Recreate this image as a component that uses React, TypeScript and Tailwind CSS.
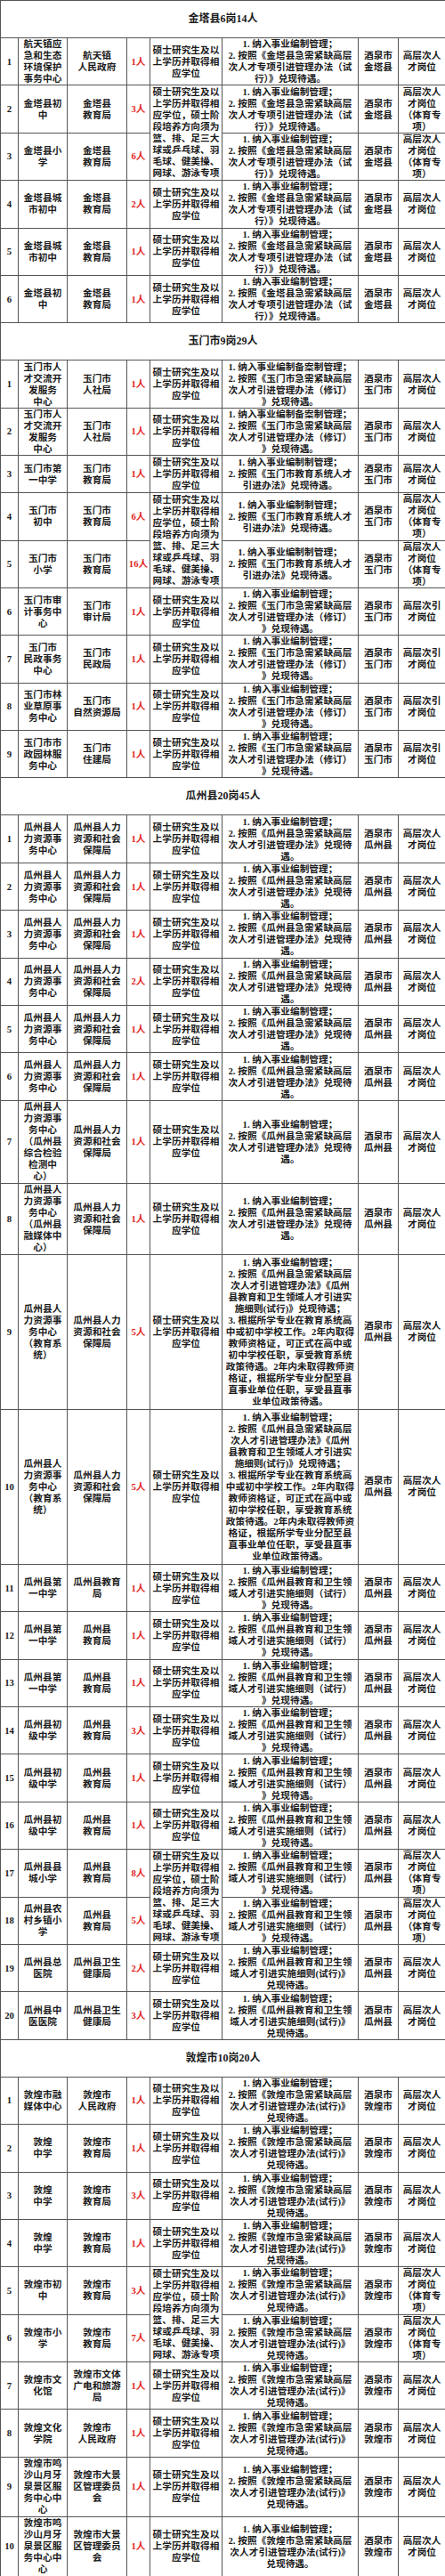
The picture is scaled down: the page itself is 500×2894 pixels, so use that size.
import React from 'react'

type Row = {
  no: string
  unit: string[]
  dept: string[]
  count: string
  edu: 'std' | 'sport' | 'skip'
  benefit: string[]
  place: string[]
  post: string[]
  lines: number
}

type Section = { title: string; rows: Row[] }

const STD = ['硕士研究生及以', '上学历并取得相', '应学位']
const SPORT = [
  '硕士研究生及以',
  '上学历并取得相',
  '应学位，硕士阶',
  '段培养方向须为',
  '篮、排、足三大',
  '球或乒乓球、羽',
  '毛球、健美操、',
  '网球、游泳专项',
]
const POST = ['高层次人', '才岗位']
const POST_SPORT = ['高层次人', '才岗位', '（体育专', '项）']
const POST_YIN = ['高层次引', '才岗位']

const JT = ['1. 纳入事业编制管理；', '2. 按照《金塔县急需紧缺高层', '次人才专项引进管理办法（试', '行）》兑现待遇。']
const YM1 = ['1. 纳入事业编制备案制管理；', '2. 按照《玉门市急需紧缺高层', '次人才引进管理办法（修订）', '》兑现待遇。']
const YM2 = ['1. 纳入事业编制制管理；', '2. 按照《玉门市教育系统人才', '引进办法》兑现待遇。']
const YM3 = ['1. 纳入事业编制管理；', '2. 按照《玉门市急需紧缺高层', '次人才引进管理办法（修订）', '》兑现待遇。']
const GZ1 = ['1. 纳入事业编制管理；', '2. 按照《瓜州县急需紧缺高层', '次人才引进管理办法》兑现待', '遇。']
const GZ2 = [
  '1. 纳入事业编制管理；',
  '2. 按照《瓜州县急需紧缺高层',
  '次人才引进管理办法》《瓜州',
  '县教育和卫生领域人才引进实',
  '施细则(试行)》兑现待遇；',
  '3. 根据所学专业在教育系统高',
  '中或初中学校工作。2年内取得',
  '教师资格证，可正式在高中或',
  '初中学校任职，享受教育系统',
  '政策待遇。2年内未取得教师资',
  '格证，根据所学专业分配至县',
  '直事业单位任职，享受县直事',
  '业单位政策待遇。',
]
const GZ3 = ['1. 纳入事业编制管理；', '2. 按照《瓜州县教育和卫生领', '域人才引进实施细则（试行）', '》兑现待遇。']
const GZ4 = ['1. 纳入事业编制管理；', '2. 按照《瓜州县教育和卫生领', '域人才引进实施细则(试行)》', '兑现待遇。']
const DH = ['1. 纳入事业编制管理；', '2. 按照《敦煌市急需紧缺高层', '次人才引进管理办法(试行)》', '兑现待遇。']

const JQJT = ['酒泉市', '金塔县']
const JQYM = ['酒泉市', '玉门市']
const JQGZ = ['酒泉市', '瓜州县']
const JQDH = ['酒泉市', '敦煌市']

const GZHR = ['瓜州县人', '力资源事', '务中心']
const GZRS = ['瓜州县人力', '资源和社会', '保障局']
const GZJY = ['瓜州县', '教育局']
const DHJY = ['敦煌市', '教育局']
const DHJQ = ['敦煌市鸣', '沙山月牙', '泉景区服', '务中心中', '心']
const DHDJ = ['敦煌市大景', '区管理委员', '会']

function r(
  no: string,
  unit: string[],
  dept: string[],
  count: string,
  edu: Row['edu'],
  benefit: string[],
  place: string[],
  post: string[],
  lines = 4
): Row {
  return { no, unit, dept, count, edu, benefit, place, post, lines }
}

const sections: Section[] = [
  {
    title: '金塔县6岗14人',
    rows: [
      r('1', ['航天镇应', '急和生态', '环境保护', '事务中心'], ['航天镇', '人民政府'], '1人', 'std', JT, JQJT, POST),
      r('2', ['金塔县初', '中'], ['金塔县', '教育局'], '3人', 'sport', JT, JQJT, POST_SPORT),
      r('3', ['金塔县小', '学'], ['金塔县', '教育局'], '6人', 'skip', JT, JQJT, POST_SPORT),
      r('4', ['金塔县城', '市初中'], ['金塔县', '教育局'], '2人', 'std', JT, JQJT, POST),
      r('5', ['金塔县城', '市初中'], ['金塔县', '教育局'], '1人', 'std', JT, JQJT, POST),
      r('6', ['金塔县初', '中'], ['金塔县', '教育局'], '1人', 'std', JT, JQJT, POST),
    ],
  },
  {
    title: '玉门市9岗29人',
    rows: [
      r('1', ['玉门市人', '才交流开', '发服务', '中心'], ['玉门市', '人社局'], '1人', 'std', YM1, JQYM, POST),
      r('2', ['玉门市人', '才交流开', '发服务', '中心'], ['玉门市', '人社局'], '1人', 'std', YM1, JQYM, POST),
      r('3', ['玉门市第', '一中学'], ['玉门市', '教育局'], '1人', 'std', YM2, JQYM, POST, 3),
      r('4', ['玉门市', '初中'], ['玉门市', '教育局'], '6人', 'sport', YM2, JQYM, POST_SPORT),
      r('5', ['玉门市', '小学'], ['玉门市', '教育局'], '16人', 'skip', YM2, JQYM, POST_SPORT),
      r('6', ['玉门市审', '计事务中', '心'], ['玉门市', '审计局'], '1人', 'std', YM3, JQYM, POST_YIN),
      r('7', ['玉门市', '民政事务', '中心'], ['玉门市', '民政局'], '1人', 'std', YM3, JQYM, POST_YIN),
      r('8', ['玉门市林', '业草原事', '务中心'], ['玉门市', '自然资源局'], '1人', 'std', YM3, JQYM, POST_YIN),
      r('9', ['玉门市市', '政园林服', '务中心'], ['玉门市', '住建局'], '1人', 'std', YM3, JQYM, POST_YIN),
    ],
  },
  {
    title: '瓜州县20岗45人',
    rows: [
      r('1', GZHR, GZRS, '1人', 'std', GZ1, JQGZ, POST),
      r('2', GZHR, GZRS, '1人', 'std', GZ1, JQGZ, POST),
      r('3', GZHR, GZRS, '1人', 'std', GZ1, JQGZ, POST),
      r('4', GZHR, GZRS, '2人', 'std', GZ1, JQGZ, POST),
      r('5', GZHR, GZRS, '1人', 'std', GZ1, JQGZ, POST),
      r('6', GZHR, GZRS, '1人', 'std', GZ1, JQGZ, POST),
      r('7', [...GZHR, '（瓜州县', '综合检验', '检测中', '心）'], GZRS, '1人', 'std', GZ1, JQGZ, POST, 7),
      r('8', [...GZHR, '（瓜州县', '融媒体中', '心）'], GZRS, '1人', 'std', GZ1, JQGZ, POST, 6),
      r('9', [...GZHR, '（教育系', '统）'], GZRS, '5人', 'std', GZ2, JQGZ, POST, 13),
      r('10', [...GZHR, '（教育系', '统）'], GZRS, '5人', 'std', GZ2, JQGZ, POST, 13),
      r('11', ['瓜州县第', '一中学'], ['瓜州县教育', '局'], '1人', 'std', GZ3, JQGZ, POST),
      r('12', ['瓜州县第', '一中学'], GZJY, '1人', 'std', GZ3, JQGZ, POST),
      r('13', ['瓜州县第', '一中学'], GZJY, '1人', 'std', GZ3, JQGZ, POST),
      r('14', ['瓜州县初', '级中学'], GZJY, '3人', 'std', GZ3, JQGZ, POST),
      r('15', ['瓜州县初', '级中学'], GZJY, '1人', 'std', GZ3, JQGZ, POST),
      r('16', ['瓜州县初', '级中学'], GZJY, '1人', 'std', GZ3, JQGZ, POST),
      r('17', ['瓜州县县', '城小学'], GZJY, '8人', 'sport', GZ3, JQGZ, POST_SPORT),
      r('18', ['瓜州县农', '村乡镇小', '学'], GZJY, '5人', 'skip', GZ3, JQGZ, POST_SPORT),
      r('19', ['瓜州县总', '医院'], ['瓜州县卫生', '健康局'], '2人', 'std', GZ4, JQGZ, POST),
      r('20', ['瓜州县中', '医医院'], ['瓜州县卫生', '健康局'], '3人', 'std', GZ4, JQGZ, POST),
    ],
  },
  {
    title: '敦煌市10岗20人',
    rows: [
      r('1', ['敦煌市融', '媒体中心'], ['敦煌市', '人民政府'], '1人', 'std', DH, JQDH, POST),
      r('2', ['敦煌', '中学'], DHJY, '1人', 'std', DH, JQDH, POST),
      r('3', ['敦煌', '中学'], DHJY, '3人', 'std', DH, JQDH, POST),
      r('4', ['敦煌', '中学'], DHJY, '1人', 'std', DH, JQDH, POST),
      r('5', ['敦煌市初', '中'], DHJY, '3人', 'sport', DH, JQDH, POST_SPORT),
      r('6', ['敦煌市小', '学'], DHJY, '7人', 'skip', DH, JQDH, POST_SPORT),
      r('7', ['敦煌市文', '化馆'], ['敦煌市文体', '广电和旅游', '局'], '1人', 'std', DH, JQDH, POST),
      r('8', ['敦煌文化', '学院'], ['敦煌市', '人民政府'], '1人', 'std', DH, JQDH, POST),
      r('9', DHJQ, DHDJ, '1人', 'std', DH, JQDH, POST, 5),
      r('10', DHJQ, DHDJ, '1人', 'std', DH, JQDH, POST, 5),
    ],
  },
]

// row height by number of text lines
const ROW_H: Record<number, string> = {
  3: 'h-[42px]',
  4: 'h-[53.4px]',
  5: 'h-[67px]',
  6: 'h-[80px]',
  7: 'h-[93px]',
  13: 'h-[174px]',
}

const cell = 'border border-[#555] p-0 text-center align-middle'

function Lines({ lines }: { lines: string[] }) {
  return (
    <>
      {lines.map((l, i) => (
        <div key={i} className="whitespace-nowrap">
          {l}
        </div>
      ))}
    </>
  )
}

export default function App() {
  return (
    <div className="w-[500px] bg-white text-[#1a1a1a] font-bold text-[10.7px] leading-[13px] [font-family:'Liberation_Serif','Noto_Sans_CJK_SC',serif]">
      <table className="w-[500px] table-fixed border-collapse">
        <colgroup>
          <col className="w-[20px]" />
          <col className="w-[55px]" />
          <col className="w-[67px]" />
          <col className="w-[26px]" />
          <col className="w-[81px]" />
          <col className="w-[153px]" />
          <col className="w-[45px]" />
          <col className="w-[53px]" />
        </colgroup>
        <tbody>
          {sections.map((s) => (
            <React.Fragment key={s.title}>
              <tr className="h-[42px]">
                <td colSpan={8} className={`${cell} text-[12px]`}>
                  {s.title}
                </td>
              </tr>
              {s.rows.map((row) => (
                <tr key={s.title + row.no} className={ROW_H[row.lines]}>
                  <td className={cell}>{row.no}</td>
                  <td className={cell}>
                    <Lines lines={row.unit} />
                  </td>
                  <td className={cell}>
                    <Lines lines={row.dept} />
                  </td>
                  <td className={`${cell} text-[#e3231f]`}>{row.count}</td>
                  {row.edu === 'std' && (
                    <td className={cell}>
                      <Lines lines={STD} />
                    </td>
                  )}
                  {row.edu === 'sport' && (
                    <td rowSpan={2} className={cell}>
                      <Lines lines={SPORT} />
                    </td>
                  )}
                  <td className={cell}>
                    <Lines lines={row.benefit} />
                  </td>
                  <td className={cell}>
                    <Lines lines={row.place} />
                  </td>
                  <td className={cell}>
                    <Lines lines={row.post} />
                  </td>
                </tr>
              ))}
            </React.Fragment>
          ))}
        </tbody>
      </table>
    </div>
  )
}
